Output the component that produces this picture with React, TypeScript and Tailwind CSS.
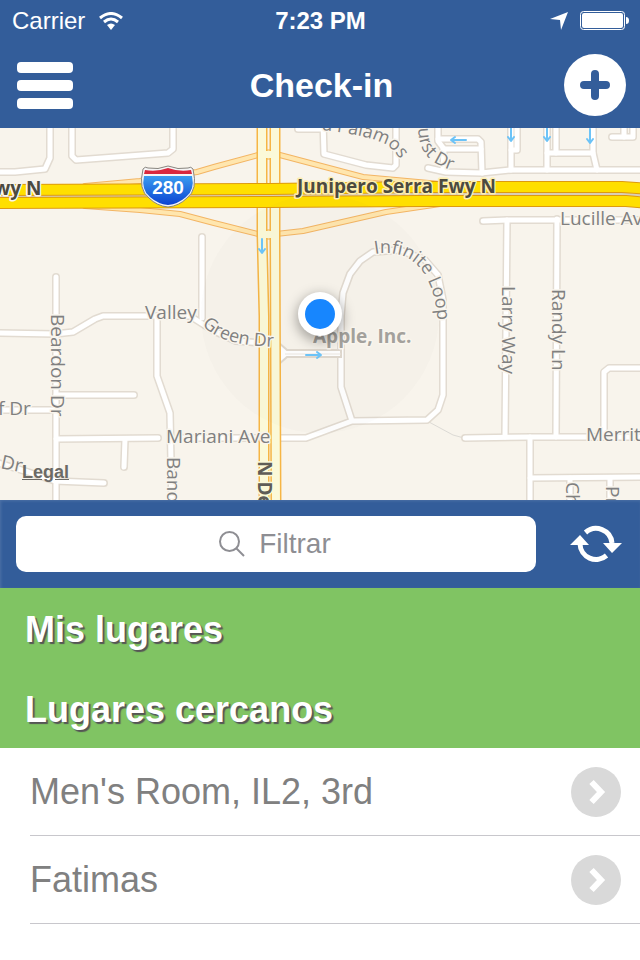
import React from "react";

const halo = "#f9f5ed";

const localRoads = [
  "M50 120V158L45 169L15 172H-5",
  "M72 120V156L76 160L168 153L173 149V120",
  "M202 237V318",
  "M56 277V510",
  "M-5 333L55 334L73 332L95 319L103 316H190L212 330L236 341L262 343",
  "M157 316V376L170 413L172 510",
  "M56 395L134 395",
  "M-5 410H56",
  "M56 439L158 438",
  "M125 439L124 467",
  "M-5 462L28 472L55 481L104 483",
  "M180 438L306 438L352 421L427 420L438 410L443 395V300L438 275L425 260L400 250L373 252L360 261L350 274L343 293L341 316V387L352 421",
  "M438 120V141L444 149L443 170",
  "M438 139H478L481 142L482 173",
  "M443 149H481",
  "M428 168L446 172L481 173L511 170H650",
  "M511 120V170",
  "M517 120V150H511",
  "M547 120V170",
  "M556 120V153",
  "M547 153H593",
  "M593 120V153L597 170",
  "M612 137H633V120",
  "M624 120V137",
  "M298 129H323",
  "M323 120L324 154L366 165L393 168L396 165V120",
  "M483 221L507 220H650",
  "M507 220L505 437",
  "M557 219L556 437",
  "M465 438L530 437H650",
  "M530 437V510",
  "M530 478L650 477",
  "M570 478V510",
  "M610 478V510",
  "M650 368H609L604 372V437",
];

const ramps = [
  "M85 186L140 181L197 172L214 167L262 154",
  "M276 154L363 177L440 184",
  "M85 206L140 210L180 214L214 223L262 235",
  "M276 234L303 231L386 212L440 204",
];

const boulevard = ["M262 120V235L264 316V510", "M275 120V235L276 510"];
const freeway = ["M-5 190L270 189L420 187H622L650 189", "M-5 203L270 202L420 201H626L650 203"];

function Strokes({ paths, color, width }: { paths: string[]; color: string; width: number }) {
  return (
    <g fill="none" stroke={color} strokeWidth={width} strokeLinecap="round" strokeLinejoin="round">
      {paths.map((d) => (
        <path key={d} d={d} />
      ))}
    </g>
  );
}

const arrows = [
  "M262 239V252M259 249L262 253L265 249",
  "M306 355H320M317 352L321 355L317 358",
  "M466 140H452M455 137L451 140L455 143",
  "M511 126V140M508 137L511 141L514 137",
  "M547 126V140M544 137L547 141L550 137",
  "M590 129V142M587 139L590 143L593 139",
];

function CityMap() {
  return (
    <svg
      className="block h-full w-full"
      viewBox="0 128 640 372"
      preserveAspectRatio="xMidYMid slice"
      role="img"
      aria-label="Mapa"
    >
      <defs>
        <linearGradient id="shield" x1="0" y1="0" x2="0" y2="1">
          <stop offset="0" stopColor="#3a9cf0" />
          <stop offset="1" stopColor="#0b43d2" />
        </linearGradient>
        <filter id="soft" x="-60%" y="-60%" width="220%" height="220%">
          <feGaussianBlur stdDeviation="6" />
        </filter>
        <path id="infinite" d="M375 254C402 249 436 260 438 330" />
        <path id="green" d="M202 325C218 341 240 347 290 347" />
        <path id="palamos" d="M322 130C350 133 375 138 388 146Q397 152 404 168" />
        <path id="hurst" d="M418 117C418 150 420 166 480 178" />
      </defs>
      <rect x="0" y="128" width="640" height="372" fill="#f8f4ec" />
      <path d="M429 422L453 435L464 438" fill="none" stroke="#dcdad5" strokeWidth="1" />
      <Strokes paths={localRoads} color="#e2dbd1" width={8} />
      <Strokes paths={localRoads} color="#ffffff" width={5} />
      <path d="M278 342L287 350H341V357H287L278 365" fill="#fff" stroke="#e0d9cf" strokeWidth="2" />
      <path d="M285 354H341" stroke="#ece7e0" strokeWidth="1" />
      <Strokes paths={ramps} color="#f3b564" width={6} />
      <Strokes paths={ramps} color="#ffe6ae" width={4} />
      <Strokes paths={boulevard} color="#f6b545" width={11} />
      <Strokes paths={boulevard} color="#fbf9d8" width={8} />
      <path d="M260 151H277V158H260ZM260 231H277V238H260Z" fill="#fbf9d8" />
      <path d="M267 150H271M267 159H271M267 230H271M267 239H271" stroke="#f6b545" strokeWidth="1" />
      <path d="M-5 196L270 195L420 194H622L650 196" fill="none" stroke="#d8cdb8" strokeWidth="3" />
      <Strokes paths={freeway} color="#dd9a10" width={12} />
      <Strokes paths={freeway} color="#ffdf00" width={10} />
      <circle cx="320" cy="314" r="119" fill="#78776a" fillOpacity="0.02" />
      <Strokes paths={arrows} color="#6cc3f7" width={2} />

      <g
        className="font-['Open_Sans','Noto_Sans',sans-serif] text-[19px]"
        fill="#808080"
        stroke={halo}
        strokeWidth="3"
        strokeLinejoin="round"
        paintOrder="stroke"
      >
        <text x="145" y="319">Valley</text>
        <g className="text-[18px]">
          <text><textPath href="#green">Green Dr</textPath></text>
          <text><textPath href="#infinite">Infinite Loop</textPath></text>
          <text><textPath href="#palamos">a Palamos</textPath></text>
          <text><textPath href="#hurst">hurst Dr</textPath></text>
        </g>
        <text x="166" y="443">Mariani Ave</text>
        <text x="560" y="225">Lucille Ave</text>
        <text x="586" y="441">Merritt Dr</text>
        <text x="-2" y="415">f Dr</text>
        <text transform="translate(0 468) rotate(12)">Dr</text>
        <text transform="translate(51 314) rotate(90)">Beardon Dr</text>
        <text transform="translate(167 457) rotate(90)">Bandley</text>
        <text transform="translate(502 286) rotate(90)">Larry Way</text>
        <text transform="translate(552 289) rotate(90)">Randy Ln</text>
        <text transform="translate(566 482) rotate(90)">Ch</text>
        <text transform="translate(606 486) rotate(90)">Pr</text>
        <text x="313" y="343" className="font-bold" fill="#a3a19c">Apple, Inc.</text>
        <g className="font-bold" fill="#4c4a40">
          <text x="-6" y="195">wy N</text>
          <text x="297" y="193" stroke="#fdeeb0">Junipero Serra Fwy N</text>
          <text transform="translate(258 461) rotate(90)" fill="#5f5d57" stroke="#fbf9d8">N De Anza</text>
        </g>
      </g>

      <path
        d="M143 169Q145 166 148 168Q158 170 168 166Q178 170 188 168Q191 166 193 169Q198 190 187 198Q179 206 168 207Q157 206 149 198Q138 190 143 169Z"
        fill="#f5f5f5"
        stroke="#88857f"
        strokeWidth="1"
      />
      <path d="M145 170Q157 172 168 168Q179 172 191 170L192 174H144Z" fill="#d9283e" />
      <path d="M144 176H192Q195 190 186 197Q178 204 168 205Q158 204 150 197Q141 190 144 176Z" fill="url(#shield)" />
      <text x="168" y="194" textAnchor="middle" fill="#fff" className="font-['Liberation_Sans',Arial,sans-serif] text-[19px] font-bold">280</text>

      <circle cx="320" cy="318" r="24" fill="#000" fillOpacity="0.3" filter="url(#soft)" />
      <circle cx="320" cy="314" r="22" fill="#fff" />
      <circle cx="320" cy="314" r="15" fill="#1786fe" />
    </svg>
  );
}

function StatusBar() {
  return (
    <div className="grid h-10 grid-cols-3 items-center pt-[2px] pr-[11px] pl-3 text-2xl">
      <div className="flex items-center gap-[14px]">
        <span>Carrier</span>
        <svg width="24" height="18" viewBox="0 0 24 18" aria-hidden="true">
          <g fill="none" stroke="#fff" strokeWidth="3">
            <path d="M1 6Q12 -3 23 6" />
            <path d="M5 10Q12 4 19 10" />
          </g>
          <path d="M8 13Q12 10 16 13L12 18Z" fill="#fff" />
        </svg>
      </div>
      <span className="text-center font-bold">7:23 PM</span>
      <div className="flex items-center justify-end gap-3">
        <svg width="18" height="18" viewBox="0 0 18 18" aria-hidden="true">
          <path d="M18 0L11 18L10 8L0 7Z" fill="#fff" />
        </svg>
        <svg width="49" height="20" viewBox="0 0 49 20" aria-hidden="true">
          <rect x="0.5" y="0.5" width="44" height="18" rx="3" fill="none" stroke="#fff" />
          <rect x="2" y="2" width="41" height="15" rx="2" fill="#fff" />
          <path d="M46 6Q49 6 49 9.500Q49 13 46 13Z" fill="#fff" />
        </svg>
      </div>
    </div>
  );
}

function PlaceRow({ name }: { name: string }) {
  return (
    <li className="ml-[30px] border-b border-[#c8c7cc]">
      <button type="button" className="flex h-[87px] w-full items-center justify-between pr-[19px] text-left text-4xl text-[#808080]">
        <span>{name}</span>
        <svg width="50" height="50" viewBox="0 0 50 50" aria-hidden="true">
          <circle cx="25" cy="25" r="25" fill="#d9d9d9" />
          <path d="M20.500 15L30 25L20.500 35" fill="none" stroke="#fff" strokeWidth="6" />
        </svg>
      </button>
    </li>
  );
}

function SectionTitle({ children }: { children: string }) {
  return (
    <h2 className="flex h-20 items-center bg-[#80c463] px-[25px] pt-[3px] text-4xl font-bold text-white [text-shadow:2px_2px_1px_#555]">
      {children}
    </h2>
  );
}

export default function App() {
  return (
    <div className="flex min-h-screen flex-col bg-white font-['Liberation_Sans',Arial,sans-serif]">
      <header className="bg-[#335d9a] text-white">
        <StatusBar />
        <div className="grid h-22 grid-cols-[1fr_auto_1fr] items-center pt-[2px] pr-[14px] pl-[17px]">
          <button type="button" aria-label="Menú" className="flex w-14 flex-col gap-[7px]">
            <span className="h-[11px] rounded-[4px] bg-white" />
            <span className="h-[11px] rounded-[4px] bg-white" />
            <span className="h-[11px] rounded-[4px] bg-white" />
          </button>
          <h1 className="text-[34px] leading-10 font-bold">Check-in</h1>
          <button type="button" aria-label="Añadir" className="justify-self-end">
            <svg width="62" height="62" viewBox="0 0 62 62" className="block">
              <circle cx="31" cy="31" r="31" fill="#fff" />
              <path d="M31 20V42M20 31H42" stroke="#335d9a" strokeWidth="8" strokeLinecap="round" />
            </svg>
          </button>
        </div>
      </header>

      <section className="relative h-[372px] overflow-hidden">
        <CityMap />
        <a href="#legal" className="absolute bottom-4 left-[22px] text-lg leading-6 font-bold text-[#6b6a66] underline">
          Legal
        </a>
      </section>

      <form className="flex h-22 items-center bg-[#335d9a] pr-[18px] pl-4 shadow-[inset_1px_1px_3px_#ffffff20]" onSubmit={(e) => e.preventDefault()}>
        <label className="flex h-14 flex-1 items-center justify-center gap-[14px] rounded-[10px] bg-white pr-[2px] text-[#8e8e93]">
          <svg width="26" height="26" viewBox="0 0 26 26" aria-hidden="true" fill="none" stroke="#8e8e93" strokeWidth="2">
            <circle cx="10.500" cy="10.500" r="9.500" />
            <path d="M17 17L25 25" />
          </svg>
          <input
            type="text"
            aria-label="Filtrar"
            placeholder="Filtrar"
            className="field-sizing-content bg-transparent text-[28px] leading-8 outline-none placeholder:text-[#8e8e93]"
          />
        </label>
        <button type="button" aria-label="Actualizar" className="ml-[34px]">
          <svg width="52" height="38" viewBox="0 0 52 38" className="block">
            <path d="M15.500 7.500A16 16 0 0 1 42 18M36.500 30.500A16 16 0 0 1 10 19" fill="none" stroke="#fff" strokeWidth="5" />
            <path d="M0 20L10 10L19 20ZM33 18H52L42 28Z" fill="#fff" />
          </svg>
        </button>
      </form>

      <main>
        <SectionTitle>Mis lugares</SectionTitle>
        <SectionTitle>Lugares cercanos</SectionTitle>
        <ul>
          <PlaceRow name="Men's Room, IL2, 3rd" />
          <PlaceRow name="Fatimas" />
        </ul>
      </main>
    </div>
  );
}
